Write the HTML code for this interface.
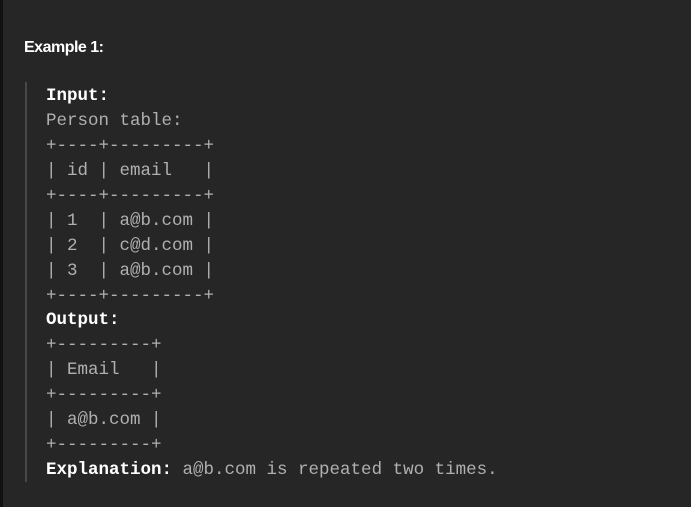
<!DOCTYPE html>
<html><head><style>
html,body{margin:0;padding:0;width:691px;height:507px;overflow:hidden;background:#262626;}
.strip{position:absolute;left:0;top:0;width:3px;height:507px;background:#111;}
h{position:absolute;left:24px;top:39px;font:bold 16px "Liberation Sans",sans-serif;color:#fff;letter-spacing:-0.5px;}
.bar{position:absolute;left:25px;top:82px;width:2px;height:400px;background:#474747;}
pre{position:absolute;left:46px;top:84px;margin:0;font:17.5px/24.93px "Liberation Mono",monospace;color:#b0b0b0;}
b{color:#fff;}
</style></head><body>
<div class="strip"></div>
<h>Example 1:</h>
<div class="bar"></div>
<pre><b>Input:</b>
Person table:
+----+---------+
| id | email   |
+----+---------+
| 1  | a@b.com |
| 2  | c@d.com |
| 3  | a@b.com |
+----+---------+
<b>Output:</b>
+---------+
| Email   |
+---------+
| a@b.com |
+---------+
<b>Explanation:</b> a@b.com is repeated two times.</pre>
</body></html>
